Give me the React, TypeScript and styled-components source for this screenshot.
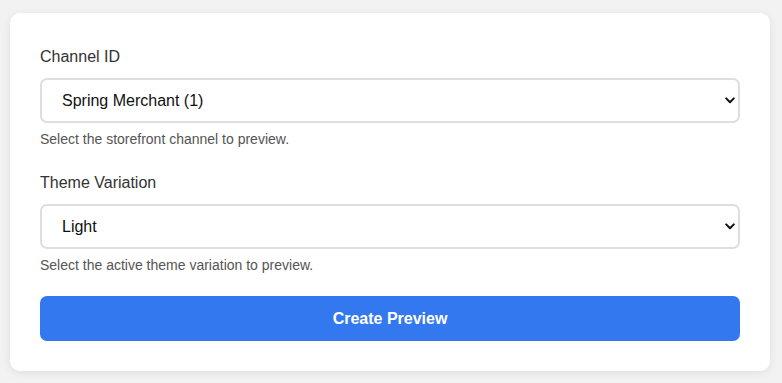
import { useState } from 'react';
import styled, { createGlobalStyle } from 'styled-components';

const GlobalStyle = createGlobalStyle`
	html, body {
		margin: 0;
		padding: 0;
		background: #f2f2f2;
		font-family: "Liberation Sans", Arial, Helvetica, sans-serif;
	}
`;

const channels = [
	{ id: '1', name: 'Spring Merchant (1)' },
	{ id: '2', name: 'Summer Outlet (2)' },
];

const variations = ['Light', 'Dark'];

export default function App() {
	const [channel, setChannel] = useState('1');
	const [variation, setVariation] = useState('Light');

	return (
		<>
			<GlobalStyle />
			<Page>
				<Card>
					<Field>
						<Label htmlFor="channel">Channel ID</Label>
						<SelectWrap>
							<Select
								id="channel"
								value={channel}
								onChange={(e) => setChannel(e.target.value)}
							>
								{channels.map((c) => (
									<option key={c.id} value={c.id}>
										{c.name}
									</option>
								))}
							</Select>
							<Chevron />
						</SelectWrap>
						<Help>Select the storefront channel to preview.</Help>
					</Field>

					<Field>
						<Label htmlFor="variation">Theme Variation</Label>
						<SelectWrap>
							<Select
								id="variation"
								value={variation}
								onChange={(e) => setVariation(e.target.value)}
							>
								{variations.map((v) => (
									<option key={v} value={v}>
										{v}
									</option>
								))}
							</Select>
							<Chevron />
						</SelectWrap>
						<Help>Select the active theme variation to preview.</Help>
					</Field>

					<SubmitButton type="button">Create Preview</SubmitButton>
				</Card>
			</Page>
		</>
	);
}

function Chevron() {
	return (
		<Arrow width="10" height="7" viewBox="0 0 10 7" aria-hidden="true">
			<path
				d="M1.2 1.4 L5 5.2 L8.8 1.4"
				fill="none"
				stroke="#111"
				strokeWidth="2"
				strokeLinecap="round"
				strokeLinejoin="round"
			/>
		</Arrow>
	);
}

const Page = styled.div`
	padding: 13px 12px 12px 10px;
`;

const Card = styled.div`
	background: #fff;
	border-radius: 10px;
	box-shadow: 0 2px 10px rgba(0, 0, 0, 0.08);
	padding: 32px 30px 30px;
	display: flex;
	flex-direction: column;
`;

const Field = styled.div`
	display: flex;
	flex-direction: column;
	margin-bottom: 22px;

	& + button {
		margin-top: -1px;
	}
`;

const Label = styled.label`
	font-size: 16px;
	line-height: 24px;
	color: #333;
	margin-bottom: 9px;
`;

const SelectWrap = styled.div`
	position: relative;
`;

const Select = styled.select`
	appearance: none;
	-webkit-appearance: none;
	width: 100%;
	height: 45px;
	box-sizing: border-box;
	border: 2px solid #dedede;
	border-radius: 7px;
	background: #fff;
	padding: 0 20px;
	font-family: inherit;
	font-size: 16px;
	color: #111;
	outline: none;
`;

const Arrow = styled.svg`
	position: absolute;
	right: 5px;
	top: 19px;
	pointer-events: none;
`;

const Help = styled.div`
	margin-top: 6px;
	font-size: 14px;
	line-height: 20px;
	color: #555;
`;

const SubmitButton = styled.button`
	height: 45px;
	border: none;
	border-radius: 7px;
	background: #3478f0;
	color: #fff;
	font-family: inherit;
	font-size: 16px;
	font-weight: 700;
	cursor: pointer;
`;
